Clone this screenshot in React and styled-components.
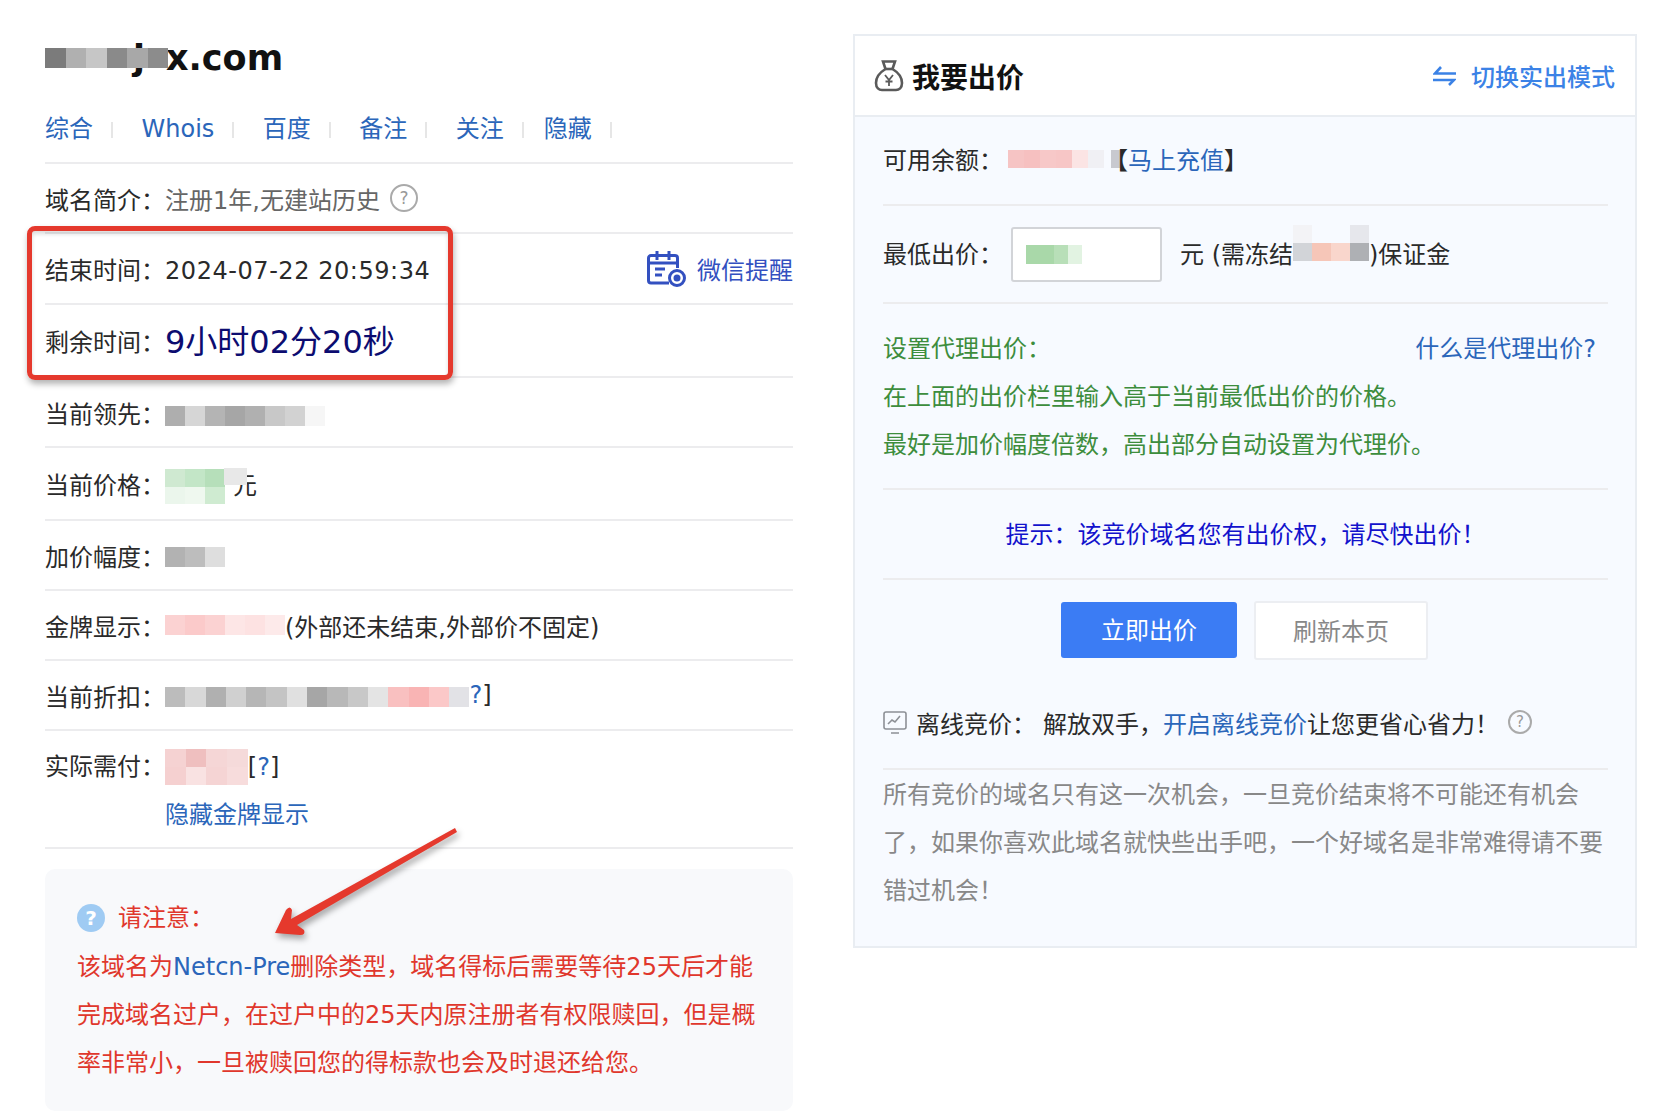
import styled, { createGlobalStyle } from "styled-components";

const BLUE = "#2b66ba";
const LINE = "#ececee";

const GlobalStyle = createGlobalStyle`
  * { box-sizing: border-box; }
  html, body { margin: 0; padding: 0; background: #fff; }
  body {
    font-family: "DejaVu Sans", "Noto Sans CJK SC", sans-serif;
    font-size: 24px;
    color: #2a2a2a;
  }
`;

const Page = styled.div`
  position: relative;
  width: 1670px;
  height: 1120px;
  display: flex;
  align-items: flex-start;
  gap: 60px;
  padding-left: 45px;
  overflow: hidden;
`;

const LeftCol = styled.div`
  width: 748px;
  display: flex;
  flex-direction: column;
`;

const Title = styled.h1`
  margin: 0;
  padding-top: 35px;
  height: 80px;
  display: flex;
  align-items: center;
  font-size: 35px;
  line-height: 44px;
  font-weight: 700;
  color: #111;
`;

const TitleMask = styled.span`
  position: relative;
  isolation: isolate;
  display: inline-flex;
  margin-right: -2px;
`;

const HiddenLetter = styled.span`
  position: absolute;
  left: 88px;
  top: -12px;
  z-index: -1;
`;

const Tabs = styled.nav`
  margin-top: 31px;
  padding-bottom: 15px;
  display: flex;
  line-height: 36px;
  border-bottom: 2px solid ${LINE};
`;

const Tab = styled.a`
  position: relative;
  color: ${BLUE};
  margin-right: ${(p) => (p.$tight ? "40px" : "48.5px")};

  &::after {
    content: "";
    position: absolute;
    right: -20px;
    top: 11px;
    width: 2px;
    height: 16px;
    background: #e6e6e6;
  }
`;

const Row = styled.div`
  height: ${(p) => p.$h || 70}px;
  display: flex;
  align-items: center;
  border-bottom: 2px solid ${LINE};
`;

const StackRow = styled(Row)`
  align-items: flex-start;
  padding-top: 12px;
  line-height: 48px;
`;

const Label = styled.span`
  width: ${(p) => p.$w || 120}px;
  flex: none;
  white-space: nowrap;
`;

const Value = styled.div`
  flex: 1;
  display: flex;
  align-items: center;
  white-space: nowrap;
  color: ${(p) => p.$color || "inherit"};
`;

const Countdown = styled.span`
  margin-bottom: 4px;
  font-size: 32px;
  color: #0c0c70;
`;

const Clock = styled.span`
  margin-top: 4px;
  letter-spacing: 0.55px;
`;

const Remind = styled.a`
  display: flex;
  align-items: center;
  gap: 11px;
  color: #3350c0;
`;

const HelpDot = styled.span`
  width: ${(p) => p.$size || 28}px;
  height: ${(p) => p.$size || 28}px;
  margin-left: ${(p) => p.$ml || 10}px;
  border: 2px solid #aaa;
  border-radius: 50%;
  display: inline-flex;
  align-items: center;
  justify-content: center;
  color: #999;
  font-size: ${(p) => (p.$size ? 15 : 17)}px;
  line-height: 1;
`;

const Link = styled.a`
  color: ${BLUE};
`;

const MosaicGrid = styled.span`
  display: inline-grid;
  flex: none;
  grid-template-columns: repeat(${(p) => p.$cols}, ${(p) => p.$w}px);
  grid-auto-rows: ${(p) => p.$h}px;
  margin-top: ${(p) => p.$drop || 0}px;
  filter: blur(0.7px);
`;

const Cell = styled.span`
  background: ${(p) => p.$c};
`;

const Mosaic = ({ rows, w = 20, h = 20, drop }) => (
  <MosaicGrid $cols={rows[0].length} $w={w} $h={h} $drop={drop}>
    {rows.flat().map((c, i) => (
      <Cell key={i} $c={c} />
    ))}
  </MosaicGrid>
);

const Masked = styled.span`
  position: relative;
  margin-left: 8px;

  &::after {
    content: "";
    position: absolute;
    left: -9px;
    top: 2px;
    width: 23px;
    height: 17px;
    background: #e8e8e8;
  }
`;

const BalanceEdge = styled.span`
  width: 9px;
  height: 18px;
  margin: 0 -16px 0 7px;
  flex: none;
  background: #c8c9cf;
`;

const Note = styled.section`
  margin-top: 20px;
  height: 242px;
  padding: 24px 32px;
  background: #f8f9fb;
  border-radius: 10px;
  color: #e0372c;
  line-height: 48px;
`;

const NoteHead = styled.div`
  height: 50px;
  display: flex;
  align-items: center;
  gap: 13px;
`;

const NoteMark = styled.span`
  width: 28px;
  height: 28px;
  border-radius: 50%;
  background: #9fcbf3;
  color: #fff;
  font-size: 20px;
  font-weight: 700;
  display: flex;
  align-items: center;
  justify-content: center;
`;

const Panel = styled.aside`
  margin-top: 34px;
  width: 784px;
  height: 914px;
  border: 2px solid #e9edf2;
  background: #f7faff;
  display: flex;
  flex-direction: column;
`;

const PanelHead = styled.header`
  height: 81px;
  flex: none;
  padding: 0 20px 0 19px;
  background: #fff;
  border-bottom: 2px solid #e9edf2;
  display: flex;
  align-items: center;
  justify-content: space-between;
`;

const PanelTitle = styled.h2`
  margin: 0;
  display: flex;
  align-items: center;
  gap: 8px;
  font-size: 28px;
  font-weight: 700;
  color: #111;
`;

const SwitchMode = styled.a`
  display: flex;
  align-items: center;
  gap: 15px;
  color: #3b82e6;
  font-weight: 500;
`;

const PanelBody = styled.div`
  padding: 0 27px 0 28px;
  display: flex;
  flex-direction: column;
`;

const PanelRow = styled.div`
  height: ${(p) => p.$h}px;
  flex: none;
  padding-bottom: ${(p) => p.$lift || 0}px;
  display: flex;
  align-items: center;
  white-space: nowrap;
  border-bottom: 2px solid ${LINE};
`;

const AmountBox = styled.div`
  width: 151px;
  height: 55px;
  margin: 4px 18px 0 0;
  padding-left: 13px;
  display: flex;
  align-items: center;
  background: #fff;
  border: 2px solid #d2d4d8;
  border-radius: 3px;
`;

const Proxy = styled.div`
  height: 186px;
  flex: none;
  padding-top: 21px;
  line-height: 48px;
  color: #3d8d3d;
  border-bottom: 2px solid ${LINE};
`;

const ProxyHead = styled.div`
  display: flex;
  justify-content: space-between;
  padding-right: 12px;
`;

const Tip = styled(PanelRow)`
  justify-content: center;
  color: #1212cc;
`;

const Actions = styled.div`
  height: 190px;
  flex: none;
  padding-top: 21px;
  border-bottom: 2px solid ${LINE};
`;

const ButtonRow = styled.div`
  height: 59px;
  padding-right: 2px;
  display: flex;
  justify-content: center;
  align-items: center;
  gap: 17px;
`;

const PrimaryBtn = styled.button`
  width: 176px;
  height: 56px;
  margin-top: -1px;
  padding-bottom: 4px;
  border: 0;
  border-radius: 3px;
  background: #3b7cf4;
  color: #fff;
  font: inherit;
`;

const PlainBtn = styled.button`
  width: 174px;
  height: 59px;
  padding-bottom: 3px;
  border: 2px solid #eceef2;
  border-radius: 3px;
  background: #fff;
  color: #888;
  font: inherit;
`;

const Offline = styled.div`
  margin-top: 38px;
  height: 48px;
  display: flex;
  align-items: center;
  white-space: nowrap;
`;

const OfflineLabel = styled.span`
  margin: 0 22px 0 9px;
  display: inline-block;
  width: 105px;
`;

const Fine = styled.p`
  margin: 0;
  padding-top: 1px;
  line-height: 48px;
  color: #888;
`;

const RedBox = styled.div`
  position: absolute;
  left: 27px;
  top: 226px;
  width: 426px;
  height: 154px;
  border: 5px solid #e5392d;
  border-radius: 8px;
  box-shadow: 1px 4px 6px rgba(0, 0, 0, 0.3), inset 0 3px 4px rgba(0, 0, 0, 0.14);
`;

const ArrowSvg = styled.svg`
  position: absolute;
  left: 260px;
  top: 815px;
  filter: drop-shadow(2px 4px 3px rgba(0, 0, 0, 0.35));
`;

const CalendarIcon = () => (
  <svg width="39" height="36" viewBox="0 0 39 36" fill="none" stroke="#3350c0" strokeWidth="3">
    <path d="M22 32H4a2.5 2.5 0 0 1-2.5-2.5V7A2.5 2.5 0 0 1 4 4.500h24A2.500 2.500 0 0 1 30.500 7v10" />
    <path d="M10 0v9M22 0v9M2 12h28M8 18h10M8 24h7" />
    <circle cx="30" cy="27" r="7.5" />
    <circle cx="30" cy="27" r="2" fill="#3350c0" />
  </svg>
);

const BagIcon = () => (
  <svg width="30" height="33" viewBox="0 0 30 33" fill="none" stroke="#5a5a5a" strokeWidth="2.6">
    <path d="M9 2.500h12l-2.500 7.500c5 3 9.500 8 9.500 14 0 5-3 7-6 7H8c-3 0-6-2-6-7 0-6 4.500-11 9.500-14z" />
    <path d="M11.500 10h7" />
    <path strokeWidth="1.8" d="M11 16l4 5 4-5M15 21v6M11.500 22.500h7" />
  </svg>
);

const SwapIcon = () => (
  <svg width="23" height="20" viewBox="0 0 23 20" fill="none" stroke="#3b82e6" strokeWidth="2.6">
    <path d="M8 1L2 7.500h21M0 14h21l-5 5" />
  </svg>
);

const MonitorIcon = () => (
  <svg width="24" height="23" viewBox="0 0 24 23" fill="none" stroke="#8d9096" strokeWidth="1.6">
    <rect x="1" y="1" width="22" height="17" rx="2" />
    <path d="M5 13l4-4 3 2 5-6M8 22h8" />
  </svg>
);

const App = () => (
  <Page>
    <GlobalStyle />
    <LeftCol>
      <Title>
        <TitleMask>
          <HiddenLetter>j</HiddenLetter>
          <Mosaic
            rows={[["#7b7b7b", "#b0b0b0", "#c6c6c6", "#8a8a8a", "#a8a8a8", "#8c8c8c"]]}
            w={20.5}
            h={20}
          />
        </TitleMask>
        x.com
      </Title>
      <Tabs>
        <Tab>综合</Tab>
        <Tab>Whois</Tab>
        <Tab>百度</Tab>
        <Tab>备注</Tab>
        <Tab $tight>关注</Tab>
        <Tab>隐藏</Tab>
      </Tabs>
      <Row>
        <Label>域名简介：</Label>
        <Value $color="#666">
          注册1年,无建站历史
          <HelpDot>?</HelpDot>
        </Value>
      </Row>
      <Row $h={71}>
        <Label>结束时间：</Label>
        <Value>
          <Clock>2024-07-22 20:59:34</Clock>
        </Value>
        <Remind>
          <CalendarIcon />
          微信提醒
        </Remind>
      </Row>
      <Row $h={73}>
        <Label>剩余时间：</Label>
        <Countdown>9小时02分20秒</Countdown>
      </Row>
      <Row>
        <Label>当前领先：</Label>
        <Mosaic
          rows={[["#aeaeae", "#d6d6d6", "#b4b4b4", "#a6a6a6", "#b0b0b0", "#c8c8c8", "#d2d2d2", "#f6f6f6"]]}
          drop={8}
        />
      </Row>
      <Row $h={73}>
        <Label>当前价格：</Label>
        <Mosaic
          rows={[
            ["#cfe9d1", "#c3e6c7", "#b6dfba"],
            ["#ebf6ec", "#eff8ef", "#cfebd1"],
          ]}
          h={17.5}
          drop={6}
        />
        <Masked>元</Masked>
      </Row>
      <Row>
        <Label>加价幅度：</Label>
        <Mosaic rows={[["#b2b2b2", "#bdbdbd", "#dedede"]]} drop={3} />
      </Row>
      <Row>
        <Label>金牌显示：</Label>
        <Mosaic rows={[["#fbd2d2", "#fbcaca", "#fbd2d2", "#fde6e6", "#fde2e2", "#fdeaea"]]} />
        (外部还未结束,外部价不固定)
      </Row>
      <Row>
        <Label>当前折扣：</Label>
        <Mosaic
          rows={[
            [
              "#bcbcbc", "#d8d8d8", "#b0b0b0", "#d0d0d0", "#b6b6b6", "#c4c4c4", "#e0e0e0",
              "#a6a6a6", "#b8b8b8", "#c8c8c8", "#e4e4e4", "#f9c0c0", "#f9b4b4", "#fbc8c8", "#e2e2e6",
            ],
          ]}
          w={20.3}
          drop={3}
        />
        <Link>?</Link>]
      </Row>
      <StackRow $h={118}>
        <Label>实际需付：</Label>
        <div>
          <Value>
            <Mosaic
              rows={[
                ["#f5d2d2", "#efbfbf", "#f5d6d6", "#f5dada"],
                ["#f5d0d0", "#f9e2e2", "#f5d4d4", "#f7dcdc"],
              ]}
              w={20.7}
              h={18}
            />
            [<Link>?</Link>]
          </Value>
          <Link>隐藏金牌显示</Link>
        </div>
      </StackRow>
      <Note>
        <NoteHead>
          <NoteMark>?</NoteMark>
          请注意：
        </NoteHead>
        该域名为<Link>Netcn-Pre</Link>删除类型，域名得标后需要等待25天后才能完成域名过户，在过户中的25天内原注册者有权限赎回，但是概率非常小，一旦被赎回您的得标款也会及时退还给您。
      </Note>
    </LeftCol>

    <Panel>
      <PanelHead>
        <PanelTitle>
          <BagIcon />
          我要出价
        </PanelTitle>
        <SwitchMode>
          <SwapIcon />
          切换实出模式
        </SwitchMode>
      </PanelHead>
      <PanelBody>
        <PanelRow $h={89} $lift={4}>
          <Label $w={125}>可用余额：</Label>
          <Mosaic
            rows={[["#f6c4c4", "#f6c0c0", "#f7c8c8", "#f7c6c6", "#fbe4e4", "#f0f0f4"]]}
            w={16}
            h={18}
          />
          <BalanceEdge />
          【<Link>马上充值</Link>】
        </PanelRow>
        <PanelRow $h={98} $lift={4}>
          <Label $w={128}>最低出价：</Label>
          <AmountBox>
            <Mosaic rows={[["#a9d8a9", "#a9d8a9", "#b8dfb8", "#e2f3e2"]]} w={14} h={19} />
          </AmountBox>
          元 (需冻结
          <Mosaic
            rows={[
              ["#f3f3f6", "transparent", "transparent", "#e6e7ec"],
              ["#d2d4d8", "#f6c6b8", "#f9d6cc", "#aeb0b4"],
              ["transparent", "transparent", "transparent", "transparent"],
            ]}
            w={19}
            h={18}
          />
          )保证金
        </PanelRow>
        <Proxy>
          <ProxyHead>
            <span>设置代理出价：</span>
            <Link>什么是代理出价?</Link>
          </ProxyHead>
          <div>在上面的出价栏里输入高于当前最低出价的价格。</div>
          <div>最好是加价幅度倍数，高出部分自动设置为代理价。</div>
        </Proxy>
        <Tip $h={90} $lift={4}>提示：该竞价域名您有出价权，请尽快出价！</Tip>
        <Actions>
          <ButtonRow>
            <PrimaryBtn>立即出价</PrimaryBtn>
            <PlainBtn>刷新本页</PlainBtn>
          </ButtonRow>
          <Offline>
            <MonitorIcon />
            <OfflineLabel>离线竞价：</OfflineLabel>
            解放双手，<Link>开启离线竞价</Link>让您更省心省力！
            <HelpDot $size={24} $ml={9}>?</HelpDot>
          </Offline>
        </Actions>
        <Fine>
          所有竞价的域名只有这一次机会，一旦竞价结束将不可能还有机会了，如果你喜欢此域名就快些出手吧，一个好域名是非常难得请不要错过机会！
        </Fine>
      </PanelBody>
    </Panel>

    <RedBox />
    <ArrowSvg width="210" height="130" viewBox="260 815 210 130">
      <path
        d="M455 828L457 832L297 925L304 930Q306 935 300 935L275 933L286 910Q290 905 292 910L291 919Z"
        fill="#e5392d"
      />
    </ArrowSvg>
  </Page>
);

export default App;
